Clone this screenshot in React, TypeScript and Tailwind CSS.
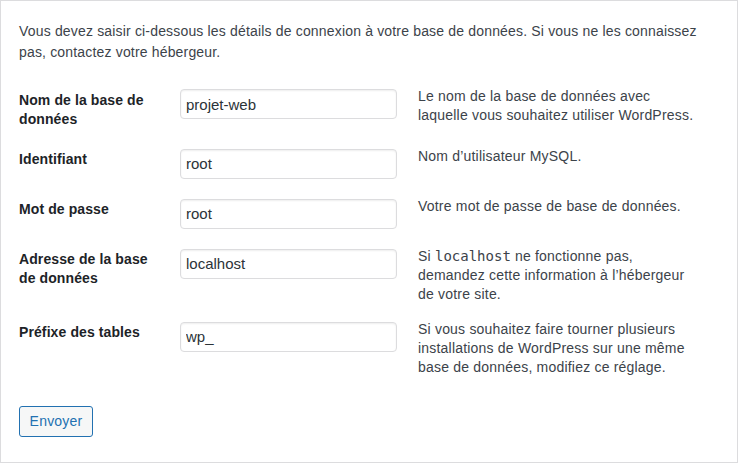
import { type ReactNode } from "react";

type Row = {
  label: ReactNode;
  value: string;
  desc: ReactNode;
};

const ROWS: Row[] = [
  {
    label: (
      <>
        Nom de la base de
        <br />
        données
      </>
    ),
    value: "projet-web",
    desc: (
      <>
        Le nom de la base de données avec
        <br />
        laquelle vous souhaitez utiliser WordPress.
      </>
    ),
  },
  { label: "Identifiant", value: "root", desc: "Nom d’utilisateur MySQL." },
  { label: "Mot de passe", value: "root", desc: "Votre mot de passe de base de données." },
  {
    label: (
      <>
        Adresse de la base
        <br />
        de données
      </>
    ),
    value: "localhost",
    desc: (
      <>
        Si <code className="font-['DejaVu_Sans_Mono',monospace] text-[14px] tracking-normal">localhost</code> ne fonctionne pas,
        <br />
        demandez cette information à l’hébergeur
        <br />
        de votre site.
      </>
    ),
  },
  {
    label: "Préfixe des tables",
    value: "wp_",
    desc: (
      <>
        Si vous souhaitez faire tourner plusieurs
        <br />
        installations de WordPress sur une même
        <br />
        base de données, modifiez ce réglage.
      </>
    ),
  },
];

export default function App() {
  return (
    <div className="w-[740px] h-[464px] bg-white font-['Liberation_Sans',Arial,sans-serif] text-[#3c434a]">
      <div className="w-[738px] h-[463px] border border-[#dcdcde] px-[18px] pt-[20px]">
        <p className="text-[14px] leading-[21px] tracking-[0.17px] whitespace-nowrap">
          Vous devez saisir ci-dessous les détails de connexion à votre base de données. Si vous ne les connaissez
          <br />
          pas, contactez votre hébergeur.
        </p>

        <div className="mt-[16px]">
          {ROWS.map((r, i) => (
            <div key={i} className="flex items-start py-[10px]">
              <div className="w-[161px] pt-[1.5px] text-[14px] leading-[19px] tracking-[0.1px] font-bold text-[#1d2327] whitespace-nowrap">
                {r.label}
              </div>
              <input
                readOnly
                defaultValue={r.value}
                className="w-[217px] h-[30px] rounded-[4px] border border-[#dcdcde] bg-white px-[5px] text-[15px] text-[#2c3338] shadow-[inset_0_1px_2px_rgba(0,0,0,0.07)] outline-none"
              />
              <div className="ml-[21px] -mt-[2px] -mb-[2px] text-[14px] leading-[19px] tracking-[0.2px] whitespace-nowrap">
                {r.desc}
              </div>
            </div>
          ))}
        </div>

        <button className="mt-[21px] w-[74px] h-[31px] rounded-[3px] border border-[#2271b1] bg-[#f6f7f7] text-[14px] tracking-[0.2px] text-[#2271b1]">
          Envoyer
        </button>
      </div>
    </div>
  );
}
